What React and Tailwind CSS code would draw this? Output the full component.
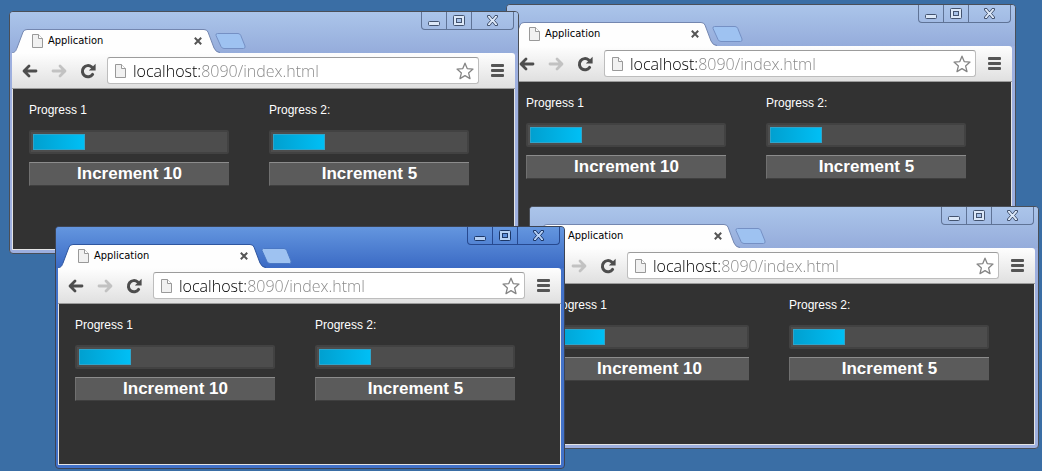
import { useState } from 'react';
import clsx from 'clsx';

// back to front
const WINDOWS = [
  { id: 'top-right', place: 'left-[506px] top-[4px]', active: false },
  { id: 'top-left', place: 'left-[9px] top-[11px]', active: false },
  { id: 'bottom-right', place: 'left-[529px] top-[206px]', active: false },
  { id: 'bottom-left', place: 'left-[55px] top-[226px]', active: true },
];

const PageIcon = ({ className }) => (
  <svg viewBox="0 0 11 14" className={clsx('h-[14px] w-[11px] shrink-0', className)} aria-hidden="true">
    <path d="M.5.5h6l4 4v9H.5z" fill="#f1f1f1" stroke="#999" />
    <path d="M6.5.5v4h4" fill="#fff" stroke="#999" />
  </svg>
);

const BackIcon = ({ className }) => (
  <svg viewBox="0 0 16 14" className={clsx('h-[14px] w-4', className)} fill="none" stroke="currentColor" aria-hidden="true">
    <path d="M7 2 2 7l5 5M2.5 7h11.5" strokeWidth="2.8" strokeLinecap="round" strokeLinejoin="round" />
  </svg>
);

const ReloadIcon = () => (
  <svg viewBox="0 0 16 16" className="h-4 w-4" aria-hidden="true">
    <path d="M12.6 11.4A5.6 5.6 0 1 1 11.6 3.9" fill="none" stroke="#4d4d4d" strokeWidth="3" strokeLinecap="round" />
    <path d="M15.6.8v6.6H8.8z" fill="#4d4d4d" />
  </svg>
);

const StarIcon = () => (
  <svg viewBox="0 0 18 18" className="h-[18px] w-[18px]" aria-hidden="true">
    <path d="M9 1.2 11.2 6.6 17 7.1 12.6 10.9 14 16.6 9 13.6 4 16.6 5.4 10.9 1 7.1 6.8 6.6z"
      fill="#fff" stroke="#858585" strokeWidth="1.3" strokeLinejoin="round" />
  </svg>
);

const CaptionButtons = ({ active }) => {
  const line = active ? 'border-[#27498f]' : 'border-[#5f7396]';
  const ink = active ? '#1c3767' : '#43536f';
  const fill = active ? '#b5d0f5' : '#dce8f8';
  return (
    <div className={clsx('mr-1 flex h-[18px] overflow-hidden rounded-b-[4px] border-x border-b', line)}>
      <button type="button" aria-label="Minimize" className={clsx('flex w-[25px] items-center justify-center border-r', line)}>
        <svg viewBox="0 0 13 13" className="h-[13px] w-[13px]">
          <rect x=".5" y="7.5" width="11" height="4" rx="1" fill={fill} stroke={ink} />
        </svg>
      </button>
      <button type="button" aria-label="Maximize" className={clsx('flex w-[25px] items-center justify-center border-r', line)}>
        <svg viewBox="0 0 13 13" className="h-[13px] w-[13px]">
          <rect x=".5" y="1.5" width="11" height="10" rx="1" fill={fill} stroke={ink} />
          <rect x="3.5" y="4.5" width="5" height="4" fill={active ? '#5f90dc' : '#a8c2e8'} stroke={ink} />
        </svg>
      </button>
      <button type="button" aria-label="Close window" className="flex w-[41px] items-center justify-center">
        <svg viewBox="0 0 13 13" className="h-[13px] w-[13px]">
          <path d="M1.5 1.5H4l2 3h1l2-3h2.5V3L8.5 6.5l3 3.5v1.5H9l-2-3H6l-2 3H1.5V10l3-3.5-3-3.5z" fill={fill} stroke={ink} />
        </svg>
      </button>
    </div>
  );
};

const TabStrip = ({ active }) => {
  const edge = active ? '#2f569f' : '#7487b0';
  return (
    <div className="flex items-end pl-[2px]">
      <div className="relative h-6 w-[208px]">
        <svg viewBox="0 0 208 24" className="absolute inset-0 h-6 w-[208px]" aria-hidden="true">
          <path d="M0 24C4 23 4 21 5 19L11 3Q12 .5 15 .5H192Q195 .5 196 3L202 19Q204 23.5 208 24z" fill="#fefefe" />
          <path d="M0 24C4 23 4 21 5 19L11 3Q12 .5 15 .5H192Q195 .5 196 3L202 19Q204 23.5 208 23.5" fill="none" stroke={edge} />
        </svg>
        <div className="relative flex h-6 items-center pl-5 pr-[18px]">
          <PageIcon />
          <span className="ml-[5px] flex-1 font-['DejaVu_Sans_Condensed','DejaVu_Sans',sans-serif] text-[11px] leading-4 text-black">Application</span>
          <button type="button" aria-label="Close tab">
            <svg viewBox="0 0 8 8" className="h-2 w-2">
              <path d="M.8.8l6.4 6.4M7.2.8.8 7.2" stroke="#555" strokeWidth="2" />
            </svg>
          </button>
        </div>
      </div>
      <div className="-ml-[5px] flex h-6 items-start pt-1">
        <button type="button" aria-label="New tab">
          <svg viewBox="0 0 31 16" className="block h-4 w-[31px]">
            <path d="M2.5.5H23Q25 .5 25.8 2.5L30 13Q30.5 15.5 28.5 15.5H9Q7 15.5 6 13.5L1 2.5Q.5.5 2.5.5z" fill="#9ec2f1" stroke={active ? '#4a78c4' : '#7590c4'} />
          </svg>
        </button>
      </div>
    </div>
  );
};

const Toolbar = ({ active }) => (
  <div className={clsx('rounded-tr-[3px]', active ? 'bg-[#3b6ac4]' : 'bg-[#95acdb]')}>
    <div className="flex h-9 items-center rounded-tr-[3px] border-b border-[#9b9b9b] bg-linear-to-b from-[#fefefe] to-[#e0e0e0] pl-[10px] pr-[11px]">
      <div className="flex items-center gap-[13px] text-[#4d4d4d]">
        <button type="button" aria-label="Back"><BackIcon /></button>
        <button type="button" aria-label="Forward" className="text-[#c2c2c2]"><BackIcon className="rotate-180" /></button>
        <button type="button" aria-label="Reload"><ReloadIcon /></button>
      </div>
      <div className="ml-[11px] flex h-[27px] min-w-0 flex-1 items-center rounded-[3px] border border-[#bdbdbd] border-t-[#9c9c9c] bg-white pl-[7px] pr-1">
        <PageIcon />
        <input
          aria-label="Address"
          defaultValue="localhost:8090/index.html"
          className="ml-[7px] h-6 min-w-0 flex-1 bg-[linear-gradient(90deg,#000_68px,#858585_68px)] bg-clip-text font-['Open_Sans',sans-serif] text-[16px] font-light leading-6 text-transparent outline-none"
        />
        <button type="button" aria-label="Bookmark this page"><StarIcon /></button>
      </div>
      <button type="button" aria-label="Menu" className="ml-3 flex w-[13px] flex-col gap-[2px]">
        <span className="h-[3px] rounded-[1px] bg-[#555]" />
        <span className="h-[3px] rounded-[1px] bg-[#555]" />
        <span className="h-[3px] rounded-[1px] bg-[#555]" />
      </button>
    </div>
  </div>
);

const ProgressColumn = ({ label, step }) => {
  const [value, setValue] = useState(27);
  return (
    <div className="flex w-[200px] flex-col">
      <span className="text-[12px] leading-4 text-white">{label}</span>
      <div role="progressbar" aria-label={label} aria-valuenow={value} aria-valuemin={0} aria-valuemax={100}
        className="mt-3 h-6 rounded-[2px] border-2 border-[#424242] bg-[#4d4d4d] p-[2px]">
        <div className="h-4 border border-[#2fa5cb] bg-linear-to-r from-[#00a0d0] to-[#00bff5]" style={{ width: `${value}%` }} />
      </div>
      <button type="button" onClick={() => setValue(v => Math.min(100, v + step))}
        className="mt-2 h-6 border-b border-l border-t border-b-[#3f3f3f] border-l-[#707070] border-t-[#8c8c8c] bg-[#5b5b5b] text-[17px] font-bold leading-[22px] text-white">
        Increment {step}
      </button>
    </div>
  );
};

const BrowserWindow = ({ place, active }) => (
  <section className={clsx('absolute w-[510px] overflow-hidden rounded-[4px] border', place,
    active ? 'border-[#3d4454] bg-[#4272c9]' : 'border-[#4a4f58] bg-[#9dafdf]')}>
    <header className={clsx('flex h-[41px] items-stretch justify-between bg-linear-to-b',
      active ? 'from-[#6496df] to-[#3b6ac4]' : 'from-[#abc5ea] to-[#95acdb]')}>
      <TabStrip active={active} />
      <CaptionButtons active={active} />
    </header>
    <div className="pb-[3px] pl-[2px] pr-[3px]">
      <Toolbar active={active} />
      <main className="flex h-[161px] gap-10 border-x border-b border-[#e4e4e4] bg-[#323232] pl-4 pt-[13px]">
        <ProgressColumn label="Progress 1" step={10} />
        <ProgressColumn label="Progress 2:" step={5} />
      </main>
    </div>
  </section>
);

export default function App() {
  return (
    <div className="relative min-h-screen overflow-hidden bg-[#3a6ea5] font-['Liberation_Sans',Arial,sans-serif]">
      {WINDOWS.map(w => <BrowserWindow key={w.id} place={w.place} active={w.active} />)}
    </div>
  );
}
